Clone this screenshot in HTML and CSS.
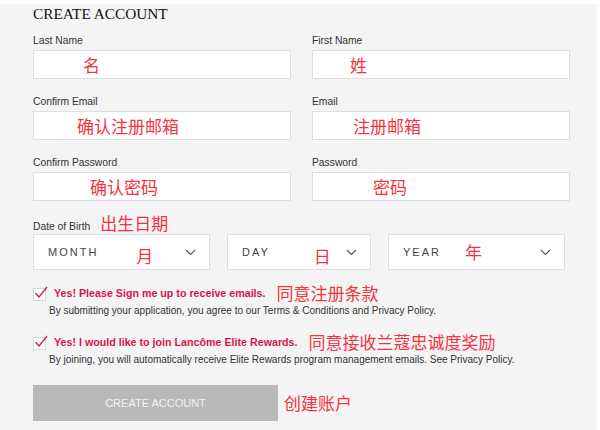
FILE: index.html
```html
<!DOCTYPE html>
<html lang="zh-CN">

<head>
    <meta charset="UTF-8">
    <meta name="viewport" content="width=device-width, initial-scale=1.0">
    <title>Create Account</title>
    <link rel="stylesheet" href="styles.css">
</head>

<body>
    <div class="page">
        <h1 class="title">CREATE ACCOUNT</h1>

        <div class="grid">
            <div class="field">
                <label>Last Name</label>
                <div class="input"><span class="note note-last">名</span></div>
            </div>
            <div class="field">
                <label>First Name</label>
                <div class="input"><span class="note note-first">姓</span></div>
            </div>
            <div class="field">
                <label>Confirm Email</label>
                <div class="input"><span class="note note-cemail">确认注册邮箱</span></div>
            </div>
            <div class="field">
                <label>Email</label>
                <div class="input"><span class="note note-email">注册邮箱</span></div>
            </div>
            <div class="field">
                <label>Confirm Password</label>
                <div class="input"><span class="note note-cpass">确认密码</span></div>
            </div>
            <div class="field">
                <label>Password</label>
                <div class="input"><span class="note note-pass">密码</span></div>
            </div>
        </div>

        <div class="dob-label">
            <label>Date of Birth</label>
            <span class="note">出生日期</span>
        </div>
        <div class="dob">
            <div class="select">
                <span class="sel-text">MONTH</span>
                <span class="note note-month">月</span>
                <svg class="chev" width="11" height="7" viewBox="0 0 11 7"><polyline points="1,1 5.5,5.5 10,1" /></svg>
            </div>
            <div class="select">
                <span class="sel-text">DAY</span>
                <span class="note note-day">日</span>
                <svg class="chev" width="11" height="7" viewBox="0 0 11 7"><polyline points="1,1 5.5,5.5 10,1" /></svg>
            </div>
            <div class="select">
                <span class="sel-text">YEAR</span>
                <span class="note note-year">年</span>
                <svg class="chev" width="11" height="7" viewBox="0 0 11 7"><polyline points="1,1 5.5,5.5 10,1" /></svg>
            </div>
        </div>

        <div class="consent">
            <div class="consent-line">
                <svg class="check" width="16" height="18" viewBox="0 0 16 18">
                    <rect x="0.5" y="4.5" width="12" height="12" fill="#fff" stroke="#d8d8d8" />
                    <polyline points="2.5,9 6,13 14,3" />
                </svg>
                <span class="yes">Yes! Please Sign me up to receive emails.</span>
                <span class="note note-c1">同意注册条款</span>
            </div>
            <p class="small">By submitting your application, you agree to our Terms &amp; Conditions and Privacy Policy.</p>
        </div>

        <div class="consent consent-2">
            <div class="consent-line">
                <svg class="check" width="16" height="18" viewBox="0 0 16 18">
                    <rect x="0.5" y="4.5" width="12" height="12" fill="#fff" stroke="#d8d8d8" />
                    <polyline points="2.5,9 6,13 14,3" />
                </svg>
                <span class="yes">Yes! I would like to join Lancôme Elite Rewards.</span>
                <span class="note note-c2">同意接收兰蔻忠诚度奖励</span>
            </div>
            <p class="small">By joining, you will automatically receive Elite Rewards program management emails. See Privacy Policy.</p>
        </div>

        <div class="submit-row">
            <button class="btn">CREATE ACCOUNT</button>
            <span class="note">创建账户</span>
        </div>
    </div>
</body>

</html>
```

FILE: styles.css
```css
* {
    margin: 0;
    padding: 0;
    box-sizing: border-box;
}

body {
    background: #fff;
    font-family: "Liberation Sans", Arial, sans-serif;
    color: #333;
}

.page {
    margin-top: 4px;
    width: 597px;
    height: 426px;
    background: #f4f4f4;
    padding-left: 33px;
    overflow: hidden;
}

.title {
    font-family: "Liberation Serif", "Times New Roman", serif;
    font-weight: normal;
    font-size: 15.3px;
    line-height: 20px;
    color: #111;
    height: 31px;
}

.grid {
    display: grid;
    grid-template-columns: 258px 258px;
    column-gap: 21px;
    row-gap: 17px;
}

label {
    display: block;
    font-size: 10.3px;
    line-height: 12px;
    color: #333;
}

.field label {
    margin-bottom: 3px;
}

.input {
    height: 29px;
    background: #fff;
    border: 1px solid #dedede;
    display: flex;
    align-items: center;
}

.note {
    font-family: "Noto Sans CJK SC", sans-serif;
    font-size: 17px;
    line-height: 20px;
    color: #f5333f;
}

.note-last { margin-left: 49px; }
.note-first { margin-left: 37px; }
.note-cemail { margin-left: 43px; }
.note-email { margin-left: 40px; }
.note-cpass { margin-left: 56px; }
.note-pass { margin-left: 60px; }

.dob-label {
    display: flex;
    align-items: baseline;
    gap: 10px;
    margin-top: 12px;
    height: 21px;
}

.dob {
    display: grid;
    grid-template-columns: 177px 144px 177px;
    column-gap: 17px;
}

.select {
    height: 36px;
    background: #fff;
    border: 1px solid #dedede;
    display: flex;
    align-items: center;
    padding: 0 13px 0 14px;
}

.sel-text {
    font-size: 11px;
    letter-spacing: 2px;
    color: #444;
}

.note-month { margin-left: 38px; margin-top: 8px; }
.note-day { margin-left: 44px; margin-top: 8px; }
.note-year { margin-left: 24px; }

.chev {
    margin-left: auto;
    fill: none;
    stroke: #555;
    stroke-width: 1.1;
}

.consent {
    margin-top: 13px;
}

.consent-2 {
    margin-top: 15px;
}

.consent-line {
    display: flex;
    align-items: center;
    height: 20px;
}

.check polyline {
    fill: none;
    stroke: #d4174a;
    stroke-width: 1.3;
}

.yes {
    margin-left: 5px;
    font-size: 10.7px;
    font-weight: bold;
    color: #d4174a;
}

.note-c1 { margin-left: 11px; }
.note-c2 { margin-left: 11px; }

.small {
    margin-left: 16px;
    margin-top: 2px;
    font-size: 10px;
    line-height: 12px;
    color: #333;
}

.submit-row {
    display: flex;
    align-items: center;
    gap: 6px;
    margin-top: 19px;
}

.btn {
    width: 245px;
    height: 36px;
    border: none;
    background: #b9b9b9;
    color: #f2f2f2;
    font-family: "Liberation Sans", Arial, sans-serif;
    font-size: 11px;
}
```
